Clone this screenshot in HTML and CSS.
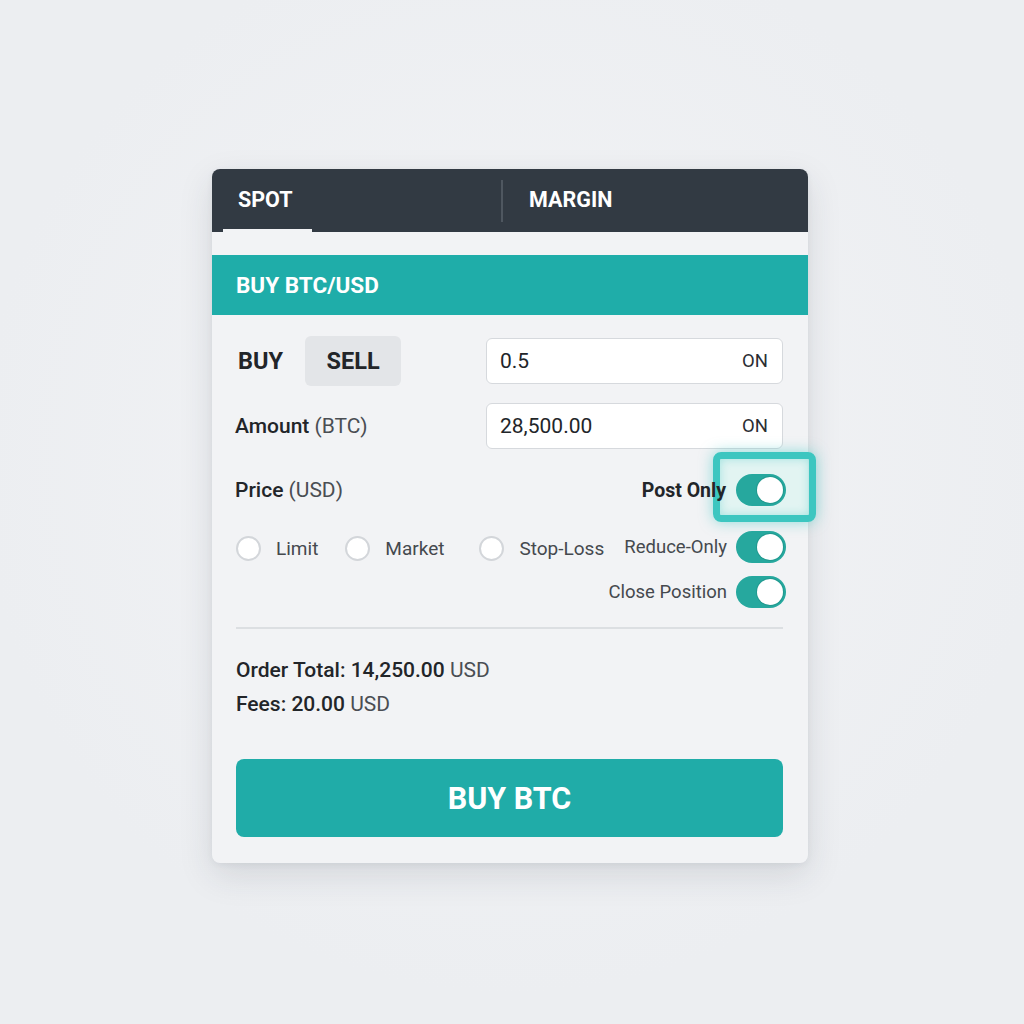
FILE: index.html
```html
<!DOCTYPE html>
<html>
<head>
<meta charset="utf-8">
<link rel="stylesheet" href="styles.css">
</head>
<body>
<div class="page">
  <div class="card">
    <div class="tabs">
      <div class="tab active">SPOT</div>
      <div class="tab-divider"></div>
      <div class="tab">MARGIN</div>
    </div>
    <div class="strip"></div>
    <div class="title-bar">BUY BTC/USD</div>
    <div class="body">
      <div class="row row-first">
        <div class="side-switch">
          <span class="side">BUY</span>
          <span class="side side-sel">SELL</span>
        </div>
        <div class="input"><span class="val">0.5</span><span class="suffix">ON</span></div>
      </div>
      <div class="row row-second">
        <div class="label"><b>Amount</b> (BTC)</div>
        <div class="input"><span class="val">28,500.00</span><span class="suffix">ON</span></div>
      </div>
      <div class="row opt-row opt-1">
        <div class="label"><b>Price</b> (USD)</div>
        <div class="toggle-item">
          <span class="toggle-label bold">Post Only</span>
          <span class="toggle-wrap">
            <span class="focus-ring"></span>
            <span class="toggle"><span class="knob"></span></span>
          </span>
        </div>
      </div>
      <div class="row opt-row opt-2">
        <div class="radios">
          <label class="radio"><span class="circle"></span>Limit</label>
          <label class="radio r-market"><span class="circle"></span>Market</label>
          <label class="radio r-stop"><span class="circle"></span>Stop-Loss</label>
        </div>
        <div class="toggle-item">
          <span class="toggle-label">Reduce-Only</span>
          <span class="toggle"><span class="knob"></span></span>
        </div>
      </div>
      <div class="row opt-row opt-3">
        <div></div>
        <div class="toggle-item">
          <span class="toggle-label">Close Position</span>
          <span class="toggle"><span class="knob"></span></span>
        </div>
      </div>
      <div class="divider"></div>
      <div class="summary">
        <div class="sum-line"><b>Order Total: 14,250.00</b> USD</div>
        <div class="sum-line"><b>Fees: 20.00</b> USD</div>
      </div>
      <button class="buy-btn">BUY BTC</button>
    </div>
  </div>
</div>
</body>
</html>
```

FILE: styles.css
```css
* { box-sizing: border-box; }
html, body {
  margin: 0;
  padding: 0;
  background: #eceef1;
  font-family: Roboto, "Liberation Sans", sans-serif;
  color: #222529;
}
.page {
  width: 1024px;
  height: 1024px;
  padding-top: 169px;
  padding-left: 212px;
  background: radial-gradient(circle at 50% 45%, #f3f4f6 0%, #eceef1 70%);
}
.card {
  width: 596px;
  background: #f2f3f5;
  border-radius: 8px;
  box-shadow: 0 12px 34px rgba(40, 50, 60, 0.13), 0 2px 6px rgba(40, 50, 60, 0.06);
}
.tabs {
  height: 63px;
  background: #323a43;
  border-radius: 8px 8px 0 0;
  display: flex;
  align-items: stretch;
}
.tab {
  color: #fff;
  font-weight: 700;
  font-size: 21.5px;
  display: flex;
  align-items: center;
  padding-bottom: 2px;
}
.tab.active {
  margin-left: 11px;
  width: 89px;
  padding-left: 15px;
  border-bottom: 3px solid #f2f3f5;
  padding-top: 3px;
}
.tab-divider {
  width: 2px;
  background: #4f5760;
  margin: 11px 0 10px 189px;
}
.tab:last-child {
  padding-left: 26px;
}
.strip {
  height: 23px;
}
.title-bar {
  height: 60px;
  background: #1fada9;
  color: #fff;
  font-weight: 700;
  font-size: 22.5px;
  display: flex;
  align-items: center;
  padding-left: 24px;
  padding-bottom: 1px;
}
.body {
  padding: 21px 25px 26px 24px;
}
.row {
  display: flex;
  justify-content: space-between;
  align-items: center;
}
.side-switch {
  display: flex;
  align-items: center;
}
.side {
  font-weight: 700;
  font-size: 23.5px;
  color: #222529;
}
.side:first-child { margin-left: 2px; }
.side-sel {
  margin-left: 22px;
  background: #e3e5e8;
  border-radius: 6px;
  width: 96px;
  height: 50px;
  display: flex;
  align-items: center;
  justify-content: center;
}
.input {
  width: 297px;
  height: 46px;
  background: #fff;
  border: 1.5px solid #d6d9dd;
  border-radius: 6px;
  display: flex;
  align-items: center;
  justify-content: space-between;
  padding: 0 14px 0 13px;
}
.val { font-size: 21px; color: #222529; }
.suffix { font-size: 18.5px; color: #2a2d31; }
.row-second { margin-top: 17px; }
.label {
  font-size: 21px;
  color: #4a4e53;
  margin-left: -1px;
}
.label b { color: #222529; font-weight: 500; }
.opt-row { height: 32px; }
.opt-1 { margin-top: 25px; }
.opt-2 { margin-top: 25px; }
.opt-3 { margin-top: 13px; }
.toggle-item {
  display: flex;
  align-items: center;
  gap: 9px;
  margin-right: -3px;
}
.toggle-label {
  font-size: 18.5px;
  color: #45494e;
}
.toggle-label.bold {
  font-weight: 700;
  font-size: 19.5px;
  color: #222529;
  margin-right: 1px;
  position: relative;
  z-index: 2;
}
.toggle-wrap {
  position: relative;
  display: flex;
}
.toggle {
  width: 50px;
  height: 32px;
  border-radius: 16px;
  background: #26a89e;
  position: relative;
  display: block;
}
.knob {
  position: absolute;
  right: 3px;
  top: 3px;
  width: 26px;
  height: 26px;
  border-radius: 50%;
  background: #fff;
  box-shadow: 0 0 0 1px rgba(20, 120, 110, 0.3);
}
.focus-ring {
  position: absolute;
  left: -23px;
  top: -22px;
  width: 103px;
  height: 70px;
  border: 7px solid #3cc6c0;
  border-radius: 8px;
  background: rgba(220, 243, 241, 0.7);
  box-shadow: 0 0 14px rgba(46, 198, 193, 0.5), inset 0 0 10px rgba(46, 198, 193, 0.35);
}
.radios {
  display: flex;
  align-items: center;
  margin-top: 3px;
}
.radio {
  display: flex;
  align-items: center;
  font-size: 19px;
  color: #45494e;
}
.circle {
  width: 25px;
  height: 25px;
  border-radius: 50%;
  border: 2px solid #d3d6da;
  background: #fff;
  margin-right: 15px;
}
.r-market { margin-left: 27px; }
.r-stop { margin-left: 35px; }
.divider {
  height: 2px;
  background: #dcdfe2;
  margin-top: 19px;
}
.summary {
  margin-top: 24px;
}
.sum-line {
  font-size: 21px;
  line-height: 34px;
  color: #4a4e53;
}
.sum-line b { font-weight: 500; color: #222529; }
.buy-btn {
  display: block;
  width: 100%;
  height: 78px;
  margin-top: 38px;
  border: none;
  border-radius: 8px;
  background: #20aca8;
  color: #fff;
  font-family: Roboto, "Liberation Sans", sans-serif;
  font-weight: 700;
  font-size: 30.5px;
  padding: 0;
}
```
